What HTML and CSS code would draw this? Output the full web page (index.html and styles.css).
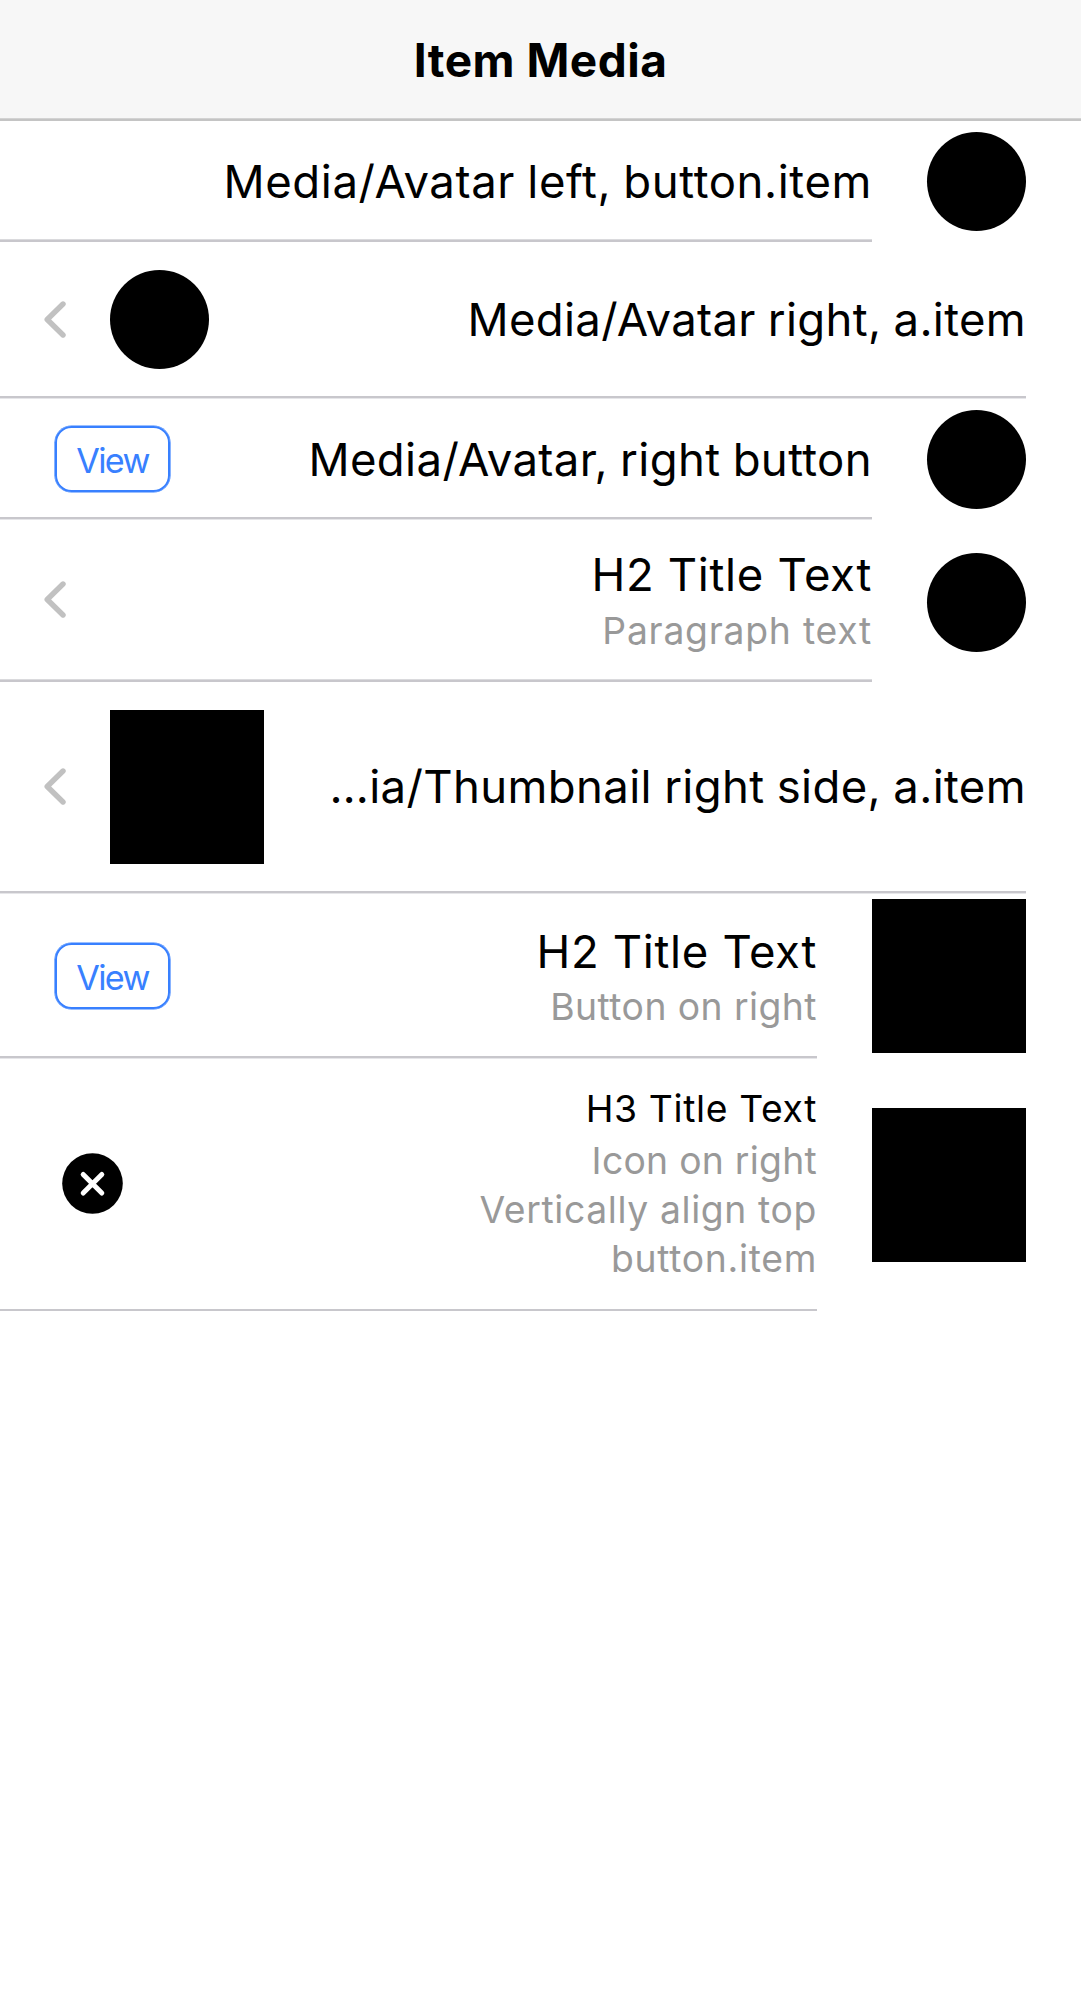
FILE: index.html
```
<!DOCTYPE html>
<html lang="en">
<head>
<meta charset="utf-8">
<title>Item Media</title>
<link rel="stylesheet" href="styles.css">
</head>
<body>
<header class="header"><h1 class="title">Item Media</h1></header>
<main class="list">
  <div class="item item-1 line-top">
    <div class="inner"><div class="label"><span class="t1">Media/Avatar left, button.item</span></div></div>
    <div class="avatar"></div>
  </div>
  <div class="item item-2">
    <div class="inner">
      <svg class="chevron" viewBox="0 0 22 37"><path d="M19 3 3.2 18.5 19 34"/></svg>
      <div class="avatar"></div>
      <div class="label"><span class="t2">Media/Avatar right, a.item</span></div>
    </div>
  </div>
  <div class="item item-3">
    <div class="inner">
      <button class="view">View</button>
      <div class="label"><span class="t3">Media/Avatar, right button</span></div>
    </div>
    <div class="avatar"></div>
  </div>
  <div class="item item-4 line-top">
    <div class="inner">
      <svg class="chevron" viewBox="0 0 22 37"><path d="M19 3 3.2 18.5 19 34"/></svg>
      <div class="label"><h2>H2 Title Text</h2><p class="p1">Paragraph text</p></div>
    </div>
    <div class="avatar"></div>
  </div>
  <div class="item item-5">
    <div class="inner">
      <svg class="chevron" viewBox="0 0 22 37"><path d="M19 3 3.2 18.5 19 34"/></svg>
      <div class="thumb"></div>
      <div class="label"><span class="t3">…ia/Thumbnail right side, a.item</span></div>
    </div>
  </div>
  <div class="item item-6">
    <div class="inner">
      <button class="view">View</button>
      <div class="label"><h2>H2 Title Text</h2><p class="p2">Button on right</p></div>
    </div>
    <div class="thumb"></div>
  </div>
  <div class="item item-7">
    <div class="inner">
      <svg class="close" viewBox="0 0 61 61"><circle cx="30.5" cy="30.5" r="30.3"/><path d="M21.2 21.4 39.8 40M39.8 21.4 21.2 40"/></svg>
      <div class="label"><h3>H3 Title Text</h3><p class="p3">Icon on right</p><p class="p4">Vertically align top</p><p class="p5">button.item</p></div>
    </div>
    <div class="thumb"></div>
  </div>
</main>
</body>
</html>
```
FILE: styles.css
```
* { box-sizing: border-box; }
body { margin: 0; background: #fff; color: #000; font-family: Inter, "Liberation Sans", sans-serif; }
h1, h2, h3, p { margin: 0; font-weight: 400; }

.header {
  height: 121px;
  padding-top: 30px;
  background: #f7f7f7;
  border-bottom: 2px solid #c4c4c4;
  box-shadow: inset 0 -1px #d3d3d3;
  text-align: center;
}
.title { font-size: 46px; font-weight: 700; line-height: 60px; letter-spacing: .5px; }

.item { display: flex; align-items: flex-start; padding-right: 55px; }
.inner {
  display: flex;
  flex: 1;
  align-items: flex-start;
  height: 100%;
  border-bottom: 2px solid #c8c7cc;
  box-shadow: 0 1px #e6e6e9;
}
.line-top .inner { box-shadow: inset 0 -1px #dadadd; }
.label { flex: 1; text-align: right; white-space: nowrap; font-size: 45.5px; line-height: 60px; }
.label span { display: block; }
.label h2 { font-size: 45.5px; line-height: 54px; letter-spacing: .66px; }
.label h3 { font-size: 37.3px; line-height: 49px; letter-spacing: .62px; }
.label p { color: #999; font-size: 37.3px; line-height: 49.5px; }
.label :is(h2, h3) + p { margin-top: 3.5px; }
.t1 { letter-spacing: .6px; word-spacing: -1.2px; }
.t2 { letter-spacing: .32px; word-spacing: -1px; }
.t3 { letter-spacing: .37px; word-spacing: -1px; }
.p1 { letter-spacing: .76px; }
.p2 { letter-spacing: .44px; }
.p3 { letter-spacing: .27px; }
.p4 { letter-spacing: .62px; }
.p5 { letter-spacing: .68px; }

.avatar { flex: none; width: 99px; height: 99px; border-radius: 50%; background: #000; }
.thumb { flex: none; width: 154px; height: 154px; background: #000; }
.item > .avatar, .item > .thumb { margin-left: 55px; }
.inner > .avatar, .inner > .thumb { margin-left: 44px; }

.chevron { flex: none; width: 22px; height: 37px; margin-left: 44px; fill: none; stroke: #c1c1c1; stroke-width: 5.4; stroke-linecap: round; stroke-linejoin: round; }
.close { flex: none; width: 61px; height: 61px; margin: 95px 0 0 61.7px; }
.close path { stroke: #fff; stroke-width: 5; stroke-linecap: round; }
.view {
  flex: none;
  width: 115px;
  height: 66px;
  margin-left: 55px;
  padding: 0;
  border: 2px solid #3880ff;
  border-radius: 16.5px;
  box-shadow: 0 0 0 .6px #3880ff;
  background: none;
  color: #3880ff;
  font: 34.2px/60px Inter, "Liberation Sans", sans-serif;
  letter-spacing: -1.7px;
  padding-top: 3px;
}

.item-1 { height: 121px; }
.item-1 .label { padding-top: 31px; }
.item-1 .avatar { margin-top: 11.3px; }

.item-2 { height: 156px; }
.item-2 .label { padding-top: 48px; }
.item-2 .avatar { margin-top: 27.6px; }
.item-2 .chevron { margin-top: 58.5px; }

.item-3 { height: 121px; }
.item-3 .label { padding-top: 31.5px; }
.item-3 .avatar { margin-top: 11.8px; }
.item-3 .view { margin-top: 28px; }

.item-4 { height: 163px; }
.item-4 .label { padding-top: 28.5px; }
.item-4 .avatar { margin-top: 33.8px; }
.item-4 .chevron { margin-top: 62px; }
.item-4 .label .p1 { margin-top: 4.5px; }

.item-5 { height: 211px; }
.item-5 .label { padding-top: 75px; }
.item-5 .thumb { margin-top: 27.5px; }
.item-5 .chevron { margin-top: 86px; }

.item-6 { height: 165px; }
.item-6 .label { padding-top: 32px; }
.item-6 .label .p2 { margin-top: 3px; }
.item-6 .thumb { margin-top: 6px; }
.item-6 .view { margin-top: 50px; }

.item-7 { height: 253px; }
.item-7 .label { padding-top: 26px; }
.item-7 .label p { line-height: 49.2px; }
.item-7 .label .p3 { margin-top: 3px; }
.item-7 .thumb { margin-top: 50px; }
```
